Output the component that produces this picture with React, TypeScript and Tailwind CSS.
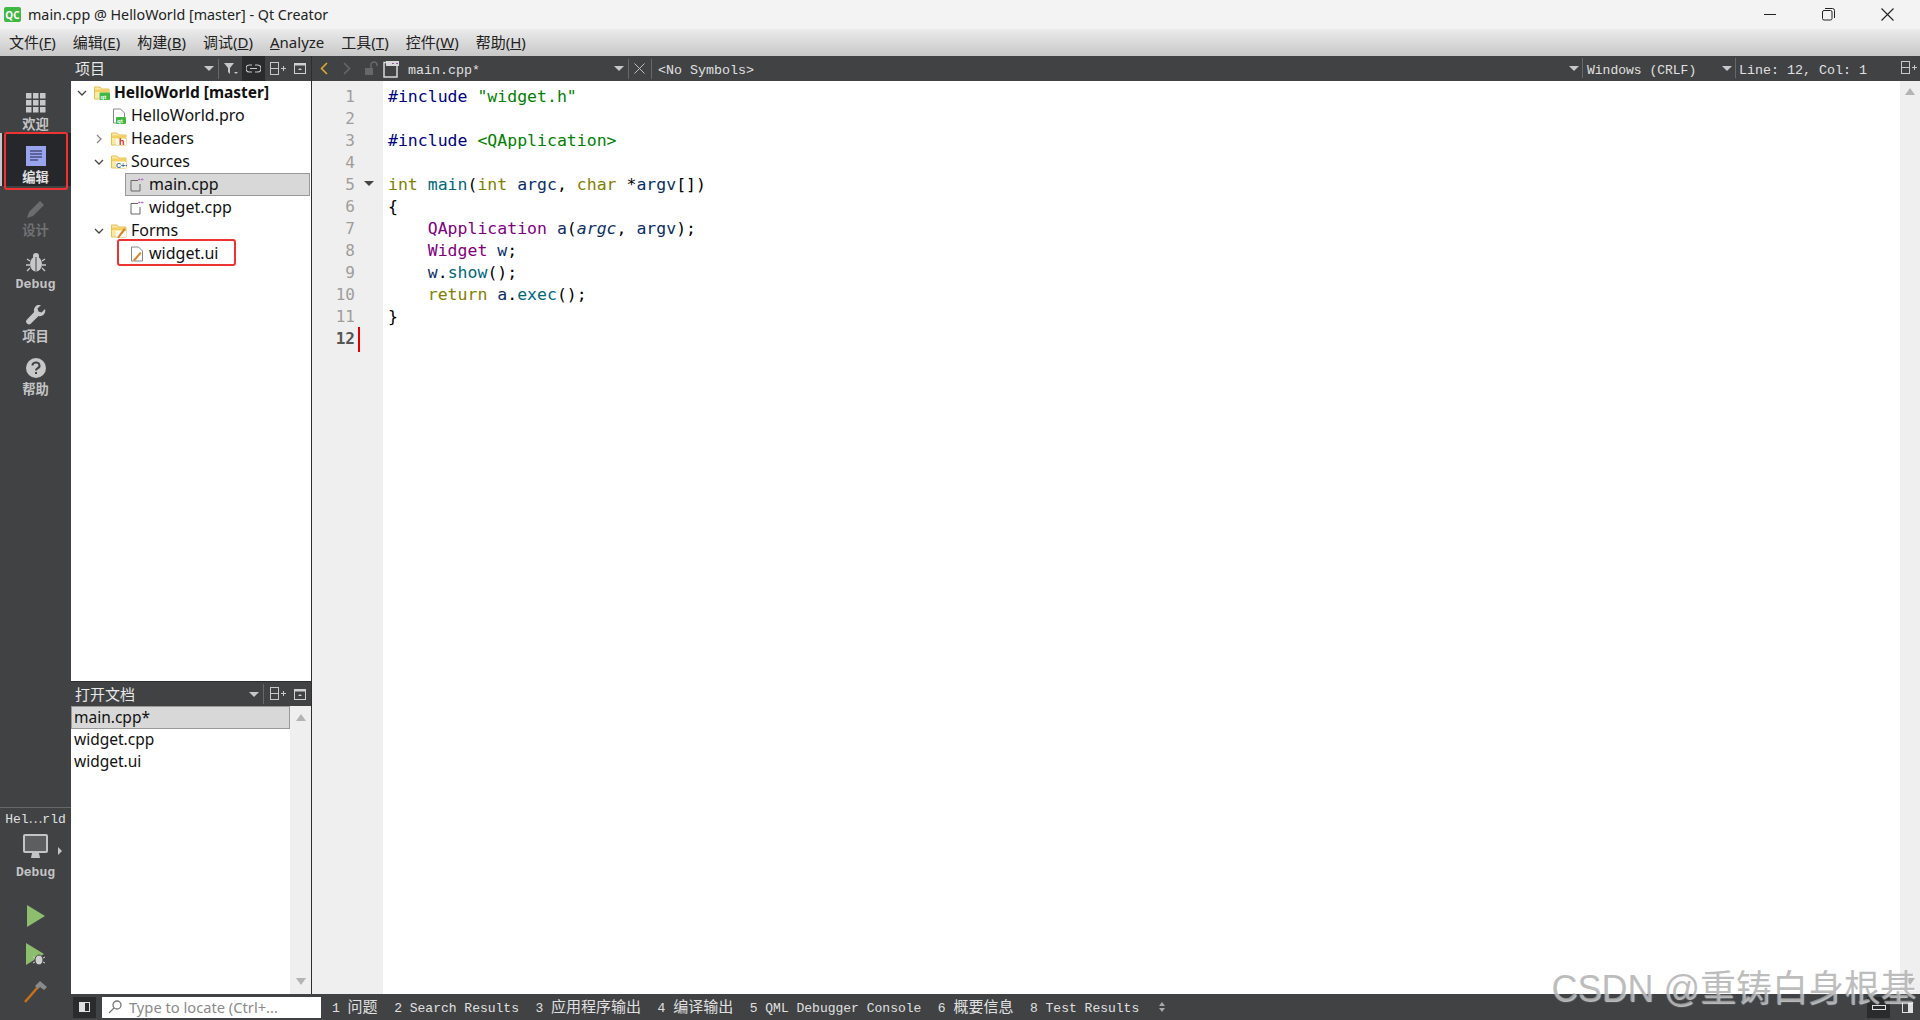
import React from "react";

const ui = "font-['Noto_Sans','Noto_Sans_CJK_SC',sans-serif]";
const mono = "font-['Liberation_Mono','Noto_Sans_CJK_SC',monospace]";

function Caret({ className = "" }: { className?: string }) {
  return <span className={`h-0 w-0 shrink-0 border-x-[5px] border-t-[5px] border-x-transparent border-t-[#c8c8c8] ${className}`} />;
}

function Sep() {
  return <span className="block h-5 w-px bg-[#66686a]" />;
}

function SplitIcon() {
  return (
    <svg width="16" height="14" viewBox="0 0 16 14" fill="none" stroke="#c8c8c8" strokeWidth="1" className="shrink-0">
      <rect x="0.5" y="0.5" width="8" height="12" />
      <path d="M0.5 6.5h8M11 6.5h5M13.5 4v5" />
    </svg>
  );
}

function CloseDockIcon() {
  return (
    <svg width="12" height="11" viewBox="0 0 12 11" fill="none" className="shrink-0">
      <rect x="0.5" y="0.5" width="11" height="10" stroke="#d0d0d0" />
      <rect x="0.5" y="0.5" width="11" height="2" fill="#d0d0d0" />
      <path d="M4 7h4L6 5z" fill="#d0d0d0" />
    </svg>
  );
}

function Folder({ badge }: { badge?: "qt" | "h" | "c" | "form" }) {
  return (
    <svg width="16" height="14" viewBox="0 0 16 14" className="shrink-0">
      <path d="M0.5 1h5.500l1.500 2h7.500v10H0.500z" fill="#fbe9a8" stroke="#e8bf55" />
      <path d="M1 3.500h14V6H1z" fill="#f4cf62" />
      <path d="M5 7h10v6H5z" fill="#fffdf2" />
      {badge === "h" && <text x="8" y="13" fontSize="9" fontWeight="700" fontFamily="Liberation Sans" fill="#d03020">h</text>}
      {badge === "c" && <text x="5" y="13" fontSize="7" fontWeight="700" fontFamily="Liberation Sans" fill="#3f6d96">C++</text>}
      {badge === "qt" && (
        <>
          <rect x="5.500" y="6.500" width="10.500" height="7.500" rx="1" fill="#41b843" />
          <text x="6.500" y="12.500" fontSize="6" fontWeight="700" fontFamily="Liberation Sans" fill="#fff">qt</text>
        </>
      )}
      {badge === "form" && <path d="M6 13.500l7-9.500 1.800 1.400L8 14z" fill="#d9822b" />}
    </svg>
  );
}

function CppFile() {
  return (
    <svg width="14" height="14" viewBox="0 0 14 14" fill="none" className="shrink-0">
      <path d="M1 2.500h7M1 2.500v10.500h9V6" stroke="#666" strokeWidth="1" />
      <path d="M8 1.500h2.500M9.200 0.500v2M11 1.500h2.500M12.200 0.500v2" stroke="#b060c0" strokeWidth="0.8" />
    </svg>
  );
}

function TreeRow({
  depth,
  arrow,
  icon,
  label,
  bold,
  selected,
}: {
  depth: number;
  arrow?: "down" | "right";
  icon: React.ReactNode;
  label: string;
  bold?: boolean;
  selected?: boolean;
}) {
  const pad = depth === 0 ? "pl-[3px]" : depth === 1 ? "pl-[20px]" : "pl-[38px]";
  return (
    <div className={`relative flex h-[23px] items-center whitespace-nowrap text-[#111] ${pad} ${bold ? "text-[15.5px] font-bold" : "text-[16px]"}`}>
      {selected && <span className="absolute inset-y-0 left-[54px] right-px border border-[#999] bg-[#d8d8d8]" />}
      <span className="relative flex w-[16px] shrink-0 justify-center">
        {arrow === "down" && (
          <svg width="10" height="6" viewBox="0 0 10 6" fill="none" stroke="#444" strokeWidth="1.3"><path d="M1 1l4 4 4-4" /></svg>
        )}
        {arrow === "right" && (
          <svg width="6" height="10" viewBox="0 0 6 10" fill="none" stroke="#888" strokeWidth="1.3"><path d="M1 1l4 4-4 4" /></svg>
        )}
      </span>
      <span className="relative ml-[2px] flex w-[19px] shrink-0 justify-center">{icon}</span>
      <span className={bold ? "relative ml-[3px]" : "relative ml-[3px] pb-[1px]"}>{label}</span>
    </div>
  );
}

function NavItem({ icon, label, dim, active }: { icon: React.ReactNode; label: string; dim?: boolean; active?: boolean }) {
  return (
    <div
      className={`flex h-[53px] w-full flex-col items-center justify-end text-[13.3px] font-bold ${active ? "border-l-2 border-[#c8c8c8] bg-[#25272a] pr-[2px] text-[#e0e0e0]" : dim ? "text-[#6f7173]" : "text-[#c4c4c4]"}`}
    >
      {icon}
      <span className={`${mono} mt-[6px] leading-[14px]`}>{label}</span>
    </div>
  );
}

const kw = "text-[#808000]";
const inc = "text-[#000080]";
const fn = "text-[#00677c]";
const v = "text-[#092e64]";
const ty = "text-[#800080]";
const str = "text-[#008000]";

const codeLines: React.ReactNode[] = [
  <><span className={inc}>#include</span> <span className={str}>"widget.h"</span></>,
  "",
  <><span className={inc}>#include</span> <span className={str}>&lt;QApplication&gt;</span></>,
  "",
  <><span className={kw}>int</span> <span className={fn}>main</span>(<span className={kw}>int</span> <span className={v}>argc</span>, <span className={kw}>char</span> *<span className={v}>argv</span>[])</>,
  "{",
  <>    <span className={ty}>QApplication</span> <span className={v}>a</span>(<span className={`${v} italic`}>argc</span>, <span className={v}>argv</span>);</>,
  <>    <span className={ty}>Widget</span> <span className={v}>w</span>;</>,
  <>    <span className={v}>w</span>.<span className={fn}>show</span>();</>,
  <>    <span className={kw}>return</span> <span className={v}>a</span>.<span className={fn}>exec</span>();</>,
  "}",
  "",
];

const menus = [
  ["文件(", "F", ")"],
  ["编辑(", "E", ")"],
  ["构建(", "B", ")"],
  ["调试(", "D", ")"],
  ["", "A", "nalyze"],
  ["工具(", "T", ")"],
  ["控件(", "W", ")"],
  ["帮助(", "H", ")"],
];

const cjk = "text-[15px] leading-none";

export default function App() {
  return (
    <div className={`${ui} relative flex h-[1020px] w-[1920px] flex-col overflow-hidden bg-white`}>
      {/* title bar */}
      <div className="flex h-[29px] shrink-0 items-center bg-[#f3f3f3] pl-[4px] text-[14.3px] text-[#222]">
        <span className="flex h-[15px] w-[17px] items-center justify-center rounded-[2px] bg-[#41b843] text-[10px] font-bold leading-none text-white">QC</span>
        <span className="ml-[7px]">main.cpp @ HelloWorld [master] - Qt Creator</span>
        <div className="ml-auto flex items-center pr-[26px]">
          <span className="h-px w-[12px] bg-[#222]" />
          <svg width="13" height="13" viewBox="0 0 13 13" fill="none" stroke="#222" className="ml-[46px]">
            <rect x="0.5" y="2.5" width="9.5" height="9.5" rx="1.5" />
            <path d="M3 0.5h7.5a2 2 0 0 1 2 2V10" />
          </svg>
          <svg width="13" height="13" viewBox="0 0 13 13" fill="none" stroke="#222" strokeWidth="1.1" className="ml-[46px]">
            <path d="M0.5 0.5l12 12M12.5 0.5l-12 12" />
          </svg>
        </div>
      </div>

      {/* menu bar */}
      <div className="flex h-[27px] shrink-0 items-center gap-[17px] bg-gradient-to-b from-[#ebebeb] to-[#c8c8c8] pl-[9px] text-[15px] text-[#222]">
        {menus.map(([a, b, c]) => (
          <span key={a + b}>
            {a}
            <span className="underline">{b}</span>
            {c}
          </span>
        ))}
      </div>

      <div className="flex min-h-0 flex-1">
        {/* mode sidebar */}
        <div className="flex w-[71px] shrink-0 flex-col bg-[#404244] pt-[24px]">
          <div className="flex flex-col">
            <NavItem
              label="欢迎"
              icon={
                <svg width="20" height="20" viewBox="0 0 20 20" fill="#c8c8c8">
                  {[0, 7, 14].flatMap((y) => [0, 7, 14].map((x) => <rect key={`${x}-${y}`} x={x} y={y} width="5.5" height="5.5" />))}
                </svg>
              }
            />
            <NavItem
              active
              label="编辑"
              icon={
                <svg width="20" height="20" viewBox="0 0 20 20">
                  <rect width="20" height="20" fill="#98a4ee" />
                  <path d="M4 5h12M4 8h12M4 11h12M4 14h8" stroke="#20234a" strokeWidth="1" />
                </svg>
              }
            />
            <NavItem
              dim
              label="设计"
              icon={
                <svg width="20" height="20" viewBox="0 0 20 20" fill="#6a6c6e">
                  <path d="M1 19l2-6L14 2l4 4L7 17z" />
                </svg>
              }
            />
            <NavItem
              label="Debug"
              icon={
                <svg width="20" height="20" viewBox="0 0 20 20" fill="#c8c8c8">
                  <ellipse cx="10" cy="12" rx="6" ry="7.5" />
                  <circle cx="10" cy="4" r="3" />
                  <path d="M1 7l3 2M19 7l-3 2M0 13h4M20 13h-4M1 19l3-3M19 19l-3-3" stroke="#c8c8c8" strokeWidth="1.3" />
                  <path d="M10 5v14" stroke="#404244" />
                </svg>
              }
            />
            <NavItem
              label="项目"
              icon={
                <svg width="20" height="20" viewBox="0 0 20 20" fill="#c8c8c8">
                  <path d="M19 4l-3.500 3.500-3-1-1-3L15 0a5.500 5.500 0 0 0-6.800 7L1 14.500a2.600 2.600 0 0 0 4 4L12.500 11A5.500 5.500 0 0 0 19 4z" />
                </svg>
              }
            />
            <NavItem
              label="帮助"
              icon={
                <svg width="20" height="20" viewBox="0 0 20 20">
                  <circle cx="10" cy="10" r="10" fill="#c8c8c8" />
                  <path d="M6.500 7.500a3.500 3 0 1 1 5 2.800c-1 .6-1.500 1-1.500 2.200" stroke="#404244" strokeWidth="2" fill="none" />
                  <rect x="9" y="14" width="2" height="2" fill="#404244" />
                </svg>
              }
            />
          </div>

          <div className="mt-auto flex flex-col items-center border-t border-[#66686a] pb-[17px]">
            <span className={`${mono} mt-[4px] text-[13px] leading-[16px] text-[#e0e0e0]`}>Hel⋯rld</span>
            <div className="relative mt-[6px]">
              <svg width="26" height="25" viewBox="0 0 26 25">
                <rect x="1" y="1" width="23" height="17" rx="1" fill="#5c5e60" stroke="#c4c4c4" strokeWidth="2" />
                <path d="M9 19h7l1 5H8z" fill="#c4c4c4" />
              </svg>
              <span className="absolute -right-[13px] top-[13px] h-0 w-0 border-y-[4px] border-l-[4px] border-y-transparent border-l-[#c4c4c4]" />
            </div>
            <span className={`${mono} mt-[6px] text-[13px] font-bold leading-[16px] text-[#c4c4c4]`}>Debug</span>
            <svg width="18" height="22" viewBox="0 0 18 22" className="mt-[24px]">
              <path d="M0 0l18 11L0 22z" fill="#8dbe6d" />
            </svg>
            <svg width="20" height="24" viewBox="0 0 20 24" className="ml-[1px] mt-[16px]">
              <path d="M0 0l18 11L0 22z" fill="#8dbe6d" />
              <ellipse cx="13" cy="17" rx="4" ry="5" fill="#d0d0d0" stroke="#404244" />
              <path d="M7 14l2 1M19 14l-2 1M7 20l2-1M19 20l-2-1" stroke="#d0d0d0" />
            </svg>
            <svg width="24" height="22" viewBox="0 0 24 22" className="mt-[14px]">
              <path d="M1 21L14 6" stroke="#c8701a" strokeWidth="2.500" />
              <path d="M11 5l5-5 7 6-3 3-4-3-2 2z" fill="#8a8a8a" />
            </svg>
          </div>
        </div>

        <div className="flex min-w-0 flex-1 flex-col">
          <div className="flex min-h-0 flex-1">
            {/* left panels */}
            <div className="flex w-[241px] shrink-0 flex-col border-r border-[#2e2e2e]">
              <div className="flex h-[25px] shrink-0 items-center whitespace-nowrap bg-[#404244] pl-[4px] text-[15px] text-[#e8e8e8]">
                <span>项目</span>
                <Caret className="ml-[99px]" />
                <span className="ml-[4px] mr-[5px]"><Sep /></span>
                <svg width="14" height="12" viewBox="0 0 14 12" fill="#c8c8c8" className="shrink-0"><path d="M0 0h10L6 5v6L4 9V5z" /><path d="M10 9h4l-2 2z" /></svg>
                <span className="ml-[4px] flex h-[25px] w-[23px] shrink-0 items-center justify-center bg-[#2a2b2c]">
                  <svg width="15" height="9" viewBox="0 0 15 9" fill="none" stroke="#c8c8c8" strokeWidth="1.2"><path d="M6 1H3.500a3 3 0 0 0 0 7H6M9 1h2.500a3 3 0 0 1 0 7H9M4 4.500h7" /></svg>
                </span>
                <span className="ml-[5px]"><SplitIcon /></span>
                <span className="ml-[8px]"><CloseDockIcon /></span>
              </div>

              <div className="h-[600px] shrink-0 bg-white">
                <TreeRow depth={0} bold arrow="down" icon={<Folder badge="qt" />} label="HelloWorld [master]" />
                <TreeRow depth={1} icon={<svg width="14" height="16" viewBox="0 0 14 16" fill="none"><path d="M1.500 1h7l4 4v10h-11z" fill="#fff" stroke="#888" /><rect x="4" y="9" width="10" height="7" rx="1" fill="#41b843" /><text x="5" y="14.500" fontSize="6" fontWeight="700" fontFamily="Liberation Sans" fill="#fff">qt</text></svg>} label="HelloWorld.pro" />
                <TreeRow depth={1} arrow="right" icon={<Folder badge="h" />} label="Headers" />
                <TreeRow depth={1} arrow="down" icon={<Folder badge="c" />} label="Sources" />
                <TreeRow depth={2} selected icon={<CppFile />} label="main.cpp" />
                <TreeRow depth={2} icon={<CppFile />} label="widget.cpp" />
                <TreeRow depth={1} arrow="down" icon={<Folder badge="form" />} label="Forms" />
                <TreeRow depth={2} icon={<svg width="14" height="16" viewBox="0 0 14 16" fill="none"><path d="M1.500 1h7l4 4v10h-11z" fill="#fff" stroke="#888" /><path d="M3 14l7-8 1.500 1.200L5 15z" fill="#d9822b" /></svg>} label="widget.ui" />
              </div>

              <div className="flex h-[25px] shrink-0 items-center whitespace-nowrap border-t border-[#2e2e2e] bg-[#404244] pl-[4px] text-[15px] text-[#e8e8e8]">
                <span>打开文档</span>
                <Caret className="ml-[114px]" />
                <span className="ml-[4px] mr-[6px]"><Sep /></span>
                <SplitIcon />
                <span className="ml-[8px]"><CloseDockIcon /></span>
              </div>

              <div className="flex min-h-0 flex-1 bg-white">
                <div className="flex-1 text-[15.5px] text-[#111]">
                  <div className="flex h-[23px] items-center border border-[#999] bg-[#d8d8d8] pl-[2px]">main.cpp*</div>
                  <div className="flex h-[22px] items-center pl-[3px]">widget.cpp</div>
                  <div className="flex h-[22px] items-center pl-[3px]">widget.ui</div>
                </div>
                <div className="flex w-[21px] flex-col items-center justify-between bg-[#efefef] pb-[9px] pt-[8px]">
                  <span className="h-0 w-0 border-x-[5px] border-b-[7px] border-x-transparent border-b-[#b4b4b4]" />
                  <span className="h-0 w-0 border-x-[5px] border-t-[7px] border-x-transparent border-t-[#b4b4b4]" />
                </div>
              </div>
            </div>

            {/* editor */}
            <div className="flex min-w-0 flex-1 flex-col">
              <div className={`${mono} flex h-[25px] shrink-0 items-center whitespace-nowrap bg-[#404244] text-[13.33px] text-[#e0e0e0]`}>
                <svg width="8" height="13" viewBox="0 0 8 13" fill="none" stroke="#e0b030" strokeWidth="1.5" className="ml-[8px]"><path d="M7 1L1.500 6.500 7 12" /></svg>
                <svg width="8" height="13" viewBox="0 0 8 13" fill="none" stroke="#66686a" strokeWidth="1.5" className="ml-[15px]"><path d="M1 1l5.500 5.500L1 12" /></svg>
                <svg width="13" height="15" viewBox="0 0 13 15" fill="none" className="ml-[14px]"><rect x="0" y="7" width="8" height="7" fill="#66686a" /><path d="M6 7V4a3 3 0 0 1 6 0v1" stroke="#66686a" strokeWidth="1.500" /></svg>
                <svg width="17" height="18" viewBox="0 0 17 18" fill="none" className="ml-[5px]"><path d="M3 2.500H1v14.500h13V6" stroke="#d8d8d8" strokeWidth="1.500" /><path d="M3 1h13v5H3z" fill="#d8d8d8" /><path d="M9 3.500h2M13 3.500h2" stroke="#a050b0" /></svg>
                <span className="ml-[8px] pt-[4px]">main.cpp*</span>
                <Caret className="ml-[134px]" />
                <span className="ml-[4px]"><Sep /></span>
                <svg width="11" height="11" viewBox="0 0 11 11" fill="none" stroke="#c0c0c0" className="ml-[5px]"><path d="M0.500 0.500l10 10M10.500 0.500l-10 10" /></svg>
                <span className="ml-[6px]"><Sep /></span>
                <span className="ml-[6px] pt-[4px]">&lt;No Symbols&gt;</span>
                <div className="ml-auto flex items-center">
                  <Caret />
                  <span className="ml-[3px]"><Sep /></span>
                  <span className="ml-[4px] w-[135px] pt-[4px] text-[13px]">Windows (CRLF)</span>
                  <Caret />
                  <span className="ml-[3px]"><Sep /></span>
                  <span className="ml-[3px] w-[162px] pt-[4px]">Line: 12, Col: 1</span>
                  <span className="mr-[3px]"><SplitIcon /></span>
                </div>
              </div>

              <div className="flex min-h-0 flex-1 bg-white">
                <div className="flex w-[71px] shrink-0 flex-col bg-[#efefef] pt-[5px] font-['DejaVu_Sans_Mono',monospace] text-[16px] leading-[22px] text-[#9f9d9c]">
                  {codeLines.map((_, i) => (
                    <div key={i} className={`relative h-[22px] pr-[28px] text-right ${i === 11 ? "font-bold text-[#555555]" : ""}`}>
                      {i + 1}
                      {i === 4 && <span className="absolute right-[9px] top-[7px] h-0 w-0 border-x-[5px] border-t-[5px] border-x-transparent border-t-[#444]" />}
                      {i === 11 && <span className="absolute right-[23px] -top-px h-[25px] w-[2px] bg-[#e00000]" />}
                    </div>
                  ))}
                </div>
                <div className="flex-1 whitespace-pre pl-[5px] pt-[5px] font-['DejaVu_Sans_Mono',monospace] text-[16.5px] leading-[22px] text-black">
                  {codeLines.map((line, i) => (
                    <div key={i} className="h-[22px]">{line}</div>
                  ))}
                </div>
                <div className="flex w-[20px] flex-col items-center justify-between bg-[#efefef] pb-[9px] pt-[7px]">
                  <span className="h-0 w-0 border-x-[5px] border-b-[7px] border-x-transparent border-b-[#b4b4b4]" />
                  <span className="h-0 w-0 border-x-[5px] border-t-[7px] border-x-transparent border-t-[#b4b4b4]" />
                </div>
              </div>
            </div>
          </div>

          {/* status bar */}
          <div className={`${mono} flex h-[26px] shrink-0 items-center whitespace-nowrap bg-[#404244] text-[13px] text-[#e0e0e0]`}>
            <span className="ml-[2px] flex h-[21px] w-[23px] items-center justify-center bg-[#2a2b2c]">
              <span className="flex h-[10px] w-[11px] border border-[#e0e0e0]"><span className="w-1/2 bg-[#e0e0e0]" /></span>
            </span>
            <div className={`${ui} ml-[6px] flex h-[21px] w-[219px] items-center bg-white pl-[6px] text-[14.7px] text-[#8a8a8a]`}>
              <svg width="14" height="14" viewBox="0 0 14 14" fill="none" stroke="#777" strokeWidth="1.300" className="mr-[7px]"><circle cx="9" cy="5" r="4" /><path d="M6 8l-5 5" /></svg>
              <span className="pt-[1px]">Type to locate (Ctrl+...</span>
            </div>
            <span className="ml-[11px] flex items-center gap-[16.5px] pt-[3px]">
              <span>1 <span className={cjk}>问题</span></span>
              <span>2 Search Results</span>
              <span>3 <span className={cjk}>应用程序输出</span></span>
              <span>4 <span className={cjk}>编译输出</span></span>
              <span>5 QML Debugger Console</span>
              <span>6 <span className={cjk}>概要信息</span></span>
              <span>8 Test Results</span>
            </span>
            <span className="ml-[20px] flex flex-col gap-[2px]">
              <span className="h-0 w-0 border-x-[3px] border-b-[4px] border-x-transparent border-b-[#aaa]" />
              <span className="h-0 w-0 border-x-[3px] border-t-[4px] border-x-transparent border-t-[#aaa]" />
            </span>
            <div className="ml-auto flex items-center pr-[7px]">
              <span className="flex h-[21px] w-[23px] items-center justify-center bg-[#2a2b2c]">
                <span className="h-[5px] w-[14px] border border-[#e0e0e0]" />
              </span>
              <span className="ml-[12px] flex h-[11px] w-[11px] border border-[#e0e0e0]"><span className="ml-auto w-1/2 bg-[#e0e0e0]" /></span>
            </div>
          </div>
        </div>
      </div>

      {/* annotation boxes drawn over the screenshot */}
      <div className="pointer-events-none absolute left-[4px] top-[132px] h-[58px] w-[64px] rounded-[3px] border-2 border-[#ee3333]" />
      <div className="pointer-events-none absolute left-[117px] top-[239px] h-[27px] w-[119px] rounded-[3px] border-2 border-[#ee3333]" />

      {/* watermark */}
      <div className="pointer-events-none absolute bottom-[9px] right-[4px] whitespace-nowrap font-['Liberation_Sans','Noto_Sans_CJK_SC',sans-serif] text-[36px] leading-[44px] text-[#a8a8a8]/75 [text-shadow:1px_1px_1px_rgba(255,255,255,0.7)]">
        CSDN @重铸白身根基
      </div>
    </div>
  );
}
